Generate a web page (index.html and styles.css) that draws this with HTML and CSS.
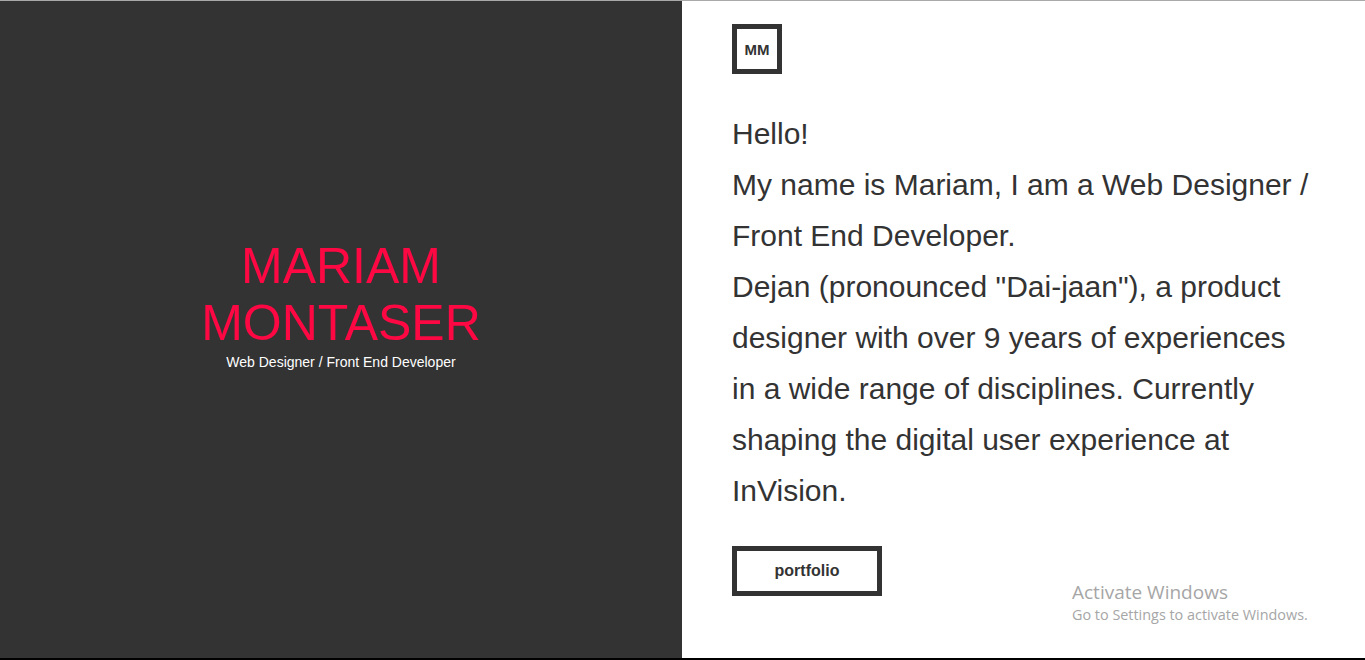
FILE: index.html
```html
<!DOCTYPE html>
<html lang="en">
<head>
<meta charset="utf-8">
<title>Mariam Montaser</title>
<link rel="stylesheet" href="styles.css">
</head>
<body>
<div class="page">
  <section class="hero">
    <div class="hero-inner">
      <h1 class="name">MARIAM<br>MONTASER</h1>
      <p class="role">Web Designer / Front End Developer</p>
    </div>
  </section>
  <section class="about">
    <div class="logo">MM</div>
    <p class="bio">Hello!<br>My name is Mariam, I am a Web Designer / Front End Developer.<br>Dejan (pronounced "Dai-jaan"), a product designer with over 9 years of experiences in a wide range of disciplines. Currently shaping the digital user experience at InVision.</p>
    <a class="btn" href="#">portfolio</a>
  </section>
  <div class="watermark">
    <div class="wm-title">Activate Windows</div>
    <div class="wm-sub">Go to Settings to activate Windows.</div>
  </div>
</div>
</body>
</html>
```
FILE: styles.css
```css
* { box-sizing: border-box; }
html, body { margin: 0; padding: 0; }
body {
  font-family: "Liberation Sans", Arial, sans-serif;
  color: #333;
  background: #fff;
}
.page {
  position: relative;
  height: 660px;
  border-top: 1px solid #a9a9a9;
  border-bottom: 2px solid #000;
  display: grid;
  grid-template-columns: 682px 1fr;
  overflow: hidden;
}
.hero {
  background: #333;
  display: flex;
  align-items: center;
  justify-content: center;
  padding-bottom: 52px;
}
.hero-inner { text-align: center; }
.name {
  margin: 0;
  font-weight: normal;
  font-size: 50px;
  line-height: 57px;
  color: #fe0844;
}
.role {
  margin: 2px 0 0;
  font-size: 14px;
  color: #fff;
}
.about {
  padding: 23px 50px 0 50px;
}
.logo {
  width: 50px;
  height: 50px;
  border: 5px solid #333;
  display: flex;
  align-items: center;
  justify-content: center;
  font-weight: bold;
  font-size: 15px;
  color: #333;
}
.bio {
  margin: 34px 0 0;
  font-size: 30px;
  line-height: 51px;
  color: #333;
}
.btn {
  display: flex;
  align-items: center;
  justify-content: center;
  width: 150px;
  height: 50px;
  margin-top: 30px;
  border: 5px solid #333;
  font-weight: bold;
  font-size: 16px;
  color: #333;
  text-decoration: none;
}
.watermark {
  position: absolute;
  left: 1072px;
  top: 579px;
  color: #a6a6a6;
  font-family: "Open Sans", "Noto Sans", sans-serif;
}
.wm-title { font-size: 19px; line-height: 25px; }
.wm-sub { font-size: 14.4px; line-height: 20px; }
```
